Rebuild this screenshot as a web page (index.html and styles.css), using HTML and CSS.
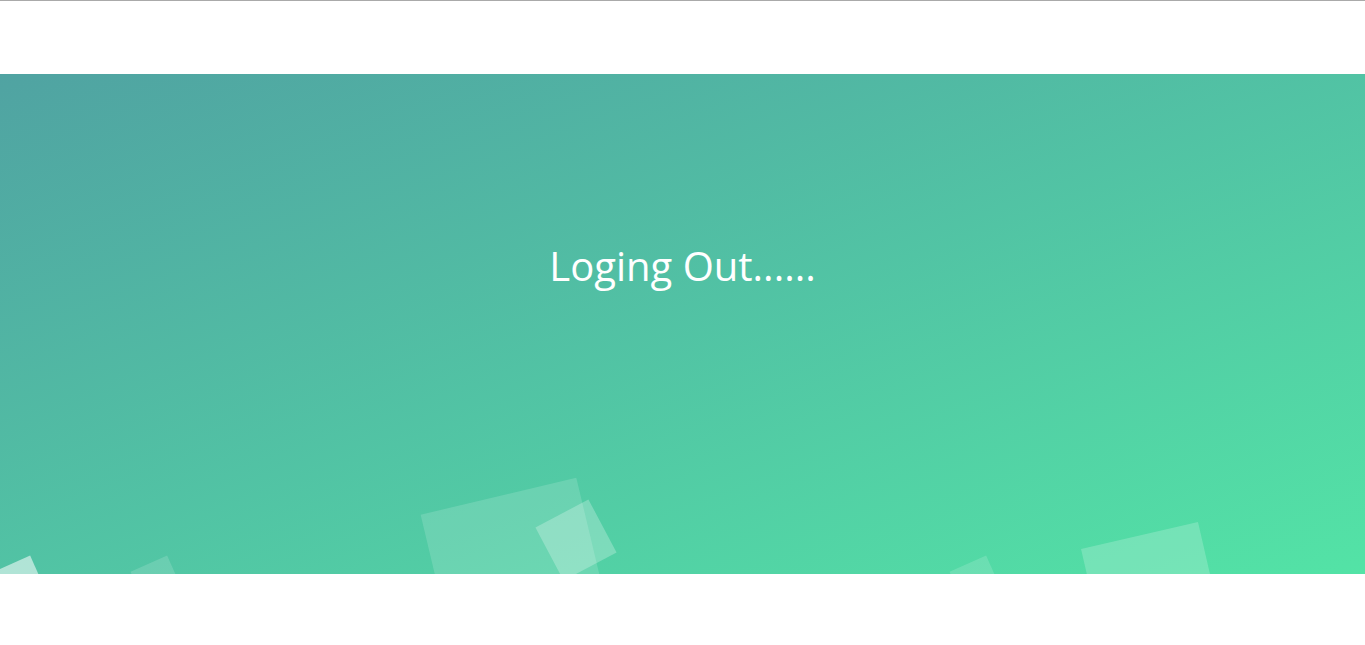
FILE: index.html
```html
<!DOCTYPE html>
<html lang="en">
<head>
<meta charset="utf-8">
<title>Logout</title>
<link rel="stylesheet" href="styles.css">
</head>
<body>
<div class="page">
  <section class="wrapper">
    <div class="container">
      <h1 class="title">Loging Out......</h1>
    </div>
    <ul class="bg-bubbles">
      <li class="sq sq-1"></li>
      <li class="sq sq-2"></li>
      <li class="sq sq-3"></li>
      <li class="sq sq-4"></li>
      <li class="sq sq-5"></li>
      <li class="sq sq-6"></li>
    </ul>
  </section>
</div>
</body>
</html>
```

FILE: styles.css
```css
html, body {
  margin: 0;
  padding: 0;
  background: #ffffff;
}

body {
  border-top: 1px solid #aaaaaa;
  font-family: "Open Sans", "Liberation Sans", sans-serif;
}

.page {
  padding-top: 73px;
}

.wrapper {
  position: relative;
  height: 500px;
  overflow: hidden;
  background: linear-gradient(to bottom right, #50a3a2 0%, #53e3a6 100%);
}

.container {
  display: flex;
  justify-content: center;
  padding-top: 162px;
  position: relative;
  z-index: 2;
}

.title {
  margin: 0;
  color: #ffffff;
  font-size: 40px;
  font-weight: 400;
  line-height: 60px;
  letter-spacing: 0;
}

.bg-bubbles {
  position: absolute;
  inset: 0;
  margin: 0;
  padding: 0;
  list-style: none;
  z-index: 1;
}

.sq {
  position: absolute;
  background-color: rgba(255, 255, 255, 0.15);
}

/* positions are relative to the wrapper (top = 74px on page) */
.sq-1 {
  width: 40px; height: 40px;
  left: 0px; top: 488px;
  transform: rotate(-24deg);
  background-color: rgba(255, 255, 255, 0.55);
}

.sq-2 {
  width: 40px; height: 40px;
  left: 137px; top: 488px;
  transform: rotate(-24deg);
}

.sq-3 {
  width: 160px; height: 160px;
  left: 437px; top: 420px;
  transform: rotate(-13.4deg);
}

.sq-4 {
  width: 60px; height: 60px;
  left: 546px; top: 436px;
  transform: rotate(-28deg);
  background-color: rgba(255, 255, 255, 0.25);
}

.sq-5 {
  width: 40px; height: 40px;
  left: 956px; top: 488px;
  transform: rotate(-24deg);
}

.sq-6 {
  width: 120px; height: 120px;
  left: 1093px; top: 460px;
  transform: rotate(-13deg);
  background-color: rgba(255, 255, 255, 0.2);
}
```
